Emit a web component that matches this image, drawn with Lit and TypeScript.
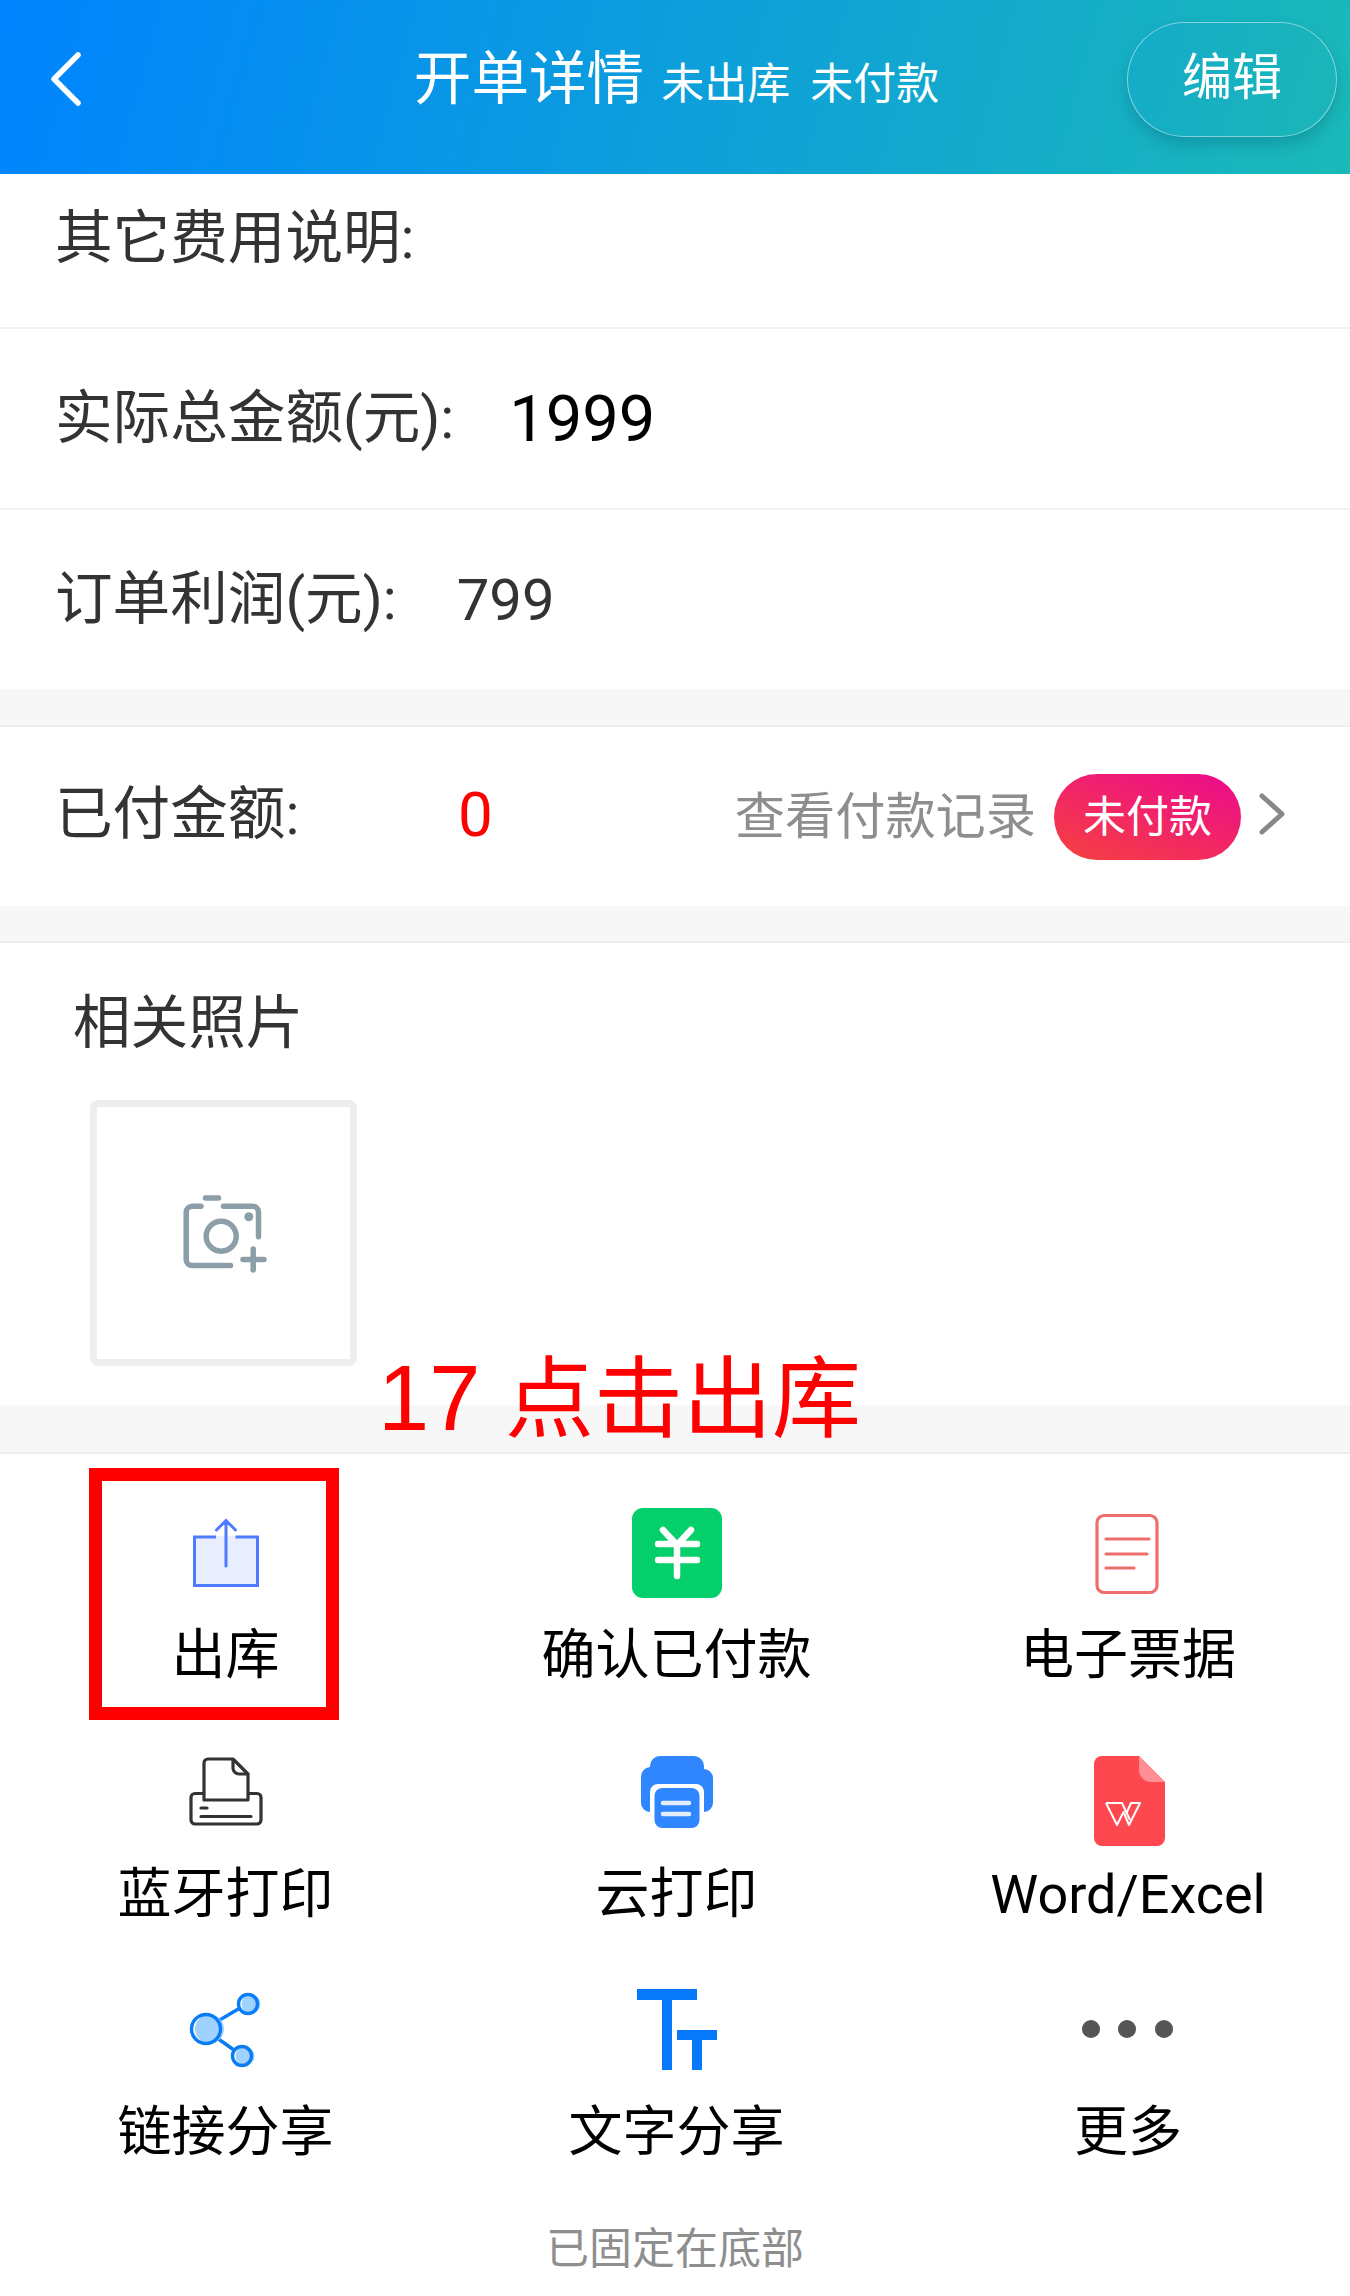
import { LitElement, html, css, svg } from "lit";
import { customElement } from "lit/decorators.js";

const icons: Record<string, unknown> = {
  out: svg`<path d="M13 28H79V79H13Z" fill="#e8eefd" stroke="none"/><path d="M36 29H14.5V77.5H77.5V29H55.5" fill="none" stroke="#4d7cfe" stroke-width="3"/><path d="M46 58V13M36.5 22L46 12.5L55.5 22" fill="none" stroke="#4d7cfe" stroke-width="3" stroke-linecap="round"/>`,
  pay: svg`<rect x="2" y="0" width="90" height="90" rx="11" fill="#04cf6b"/><path d="M33 22L47 37L61 22M28 36H67M28 52H67M47 36V68" fill="none" stroke="#fff" stroke-width="6.5" stroke-linecap="round" stroke-linejoin="round"/>`,
  doc: svg`<rect x="17" y="7.5" width="60" height="77" rx="7" fill="none" stroke="#ee6d6d" stroke-width="3.2"/><path d="M26 31H69M26 46H67M26 60H54" fill="none" stroke="#ee6d6d" stroke-width="3.2" stroke-linecap="round"/>`,
  bt: svg`<path d="M23 46.5H15a4 4 0 0 0-4 4V73a4 4 0 0 0 4 4H77a4 4 0 0 0 4-4V50.5a4 4 0 0 0-4-4H69" fill="none" stroke="#333" stroke-width="3.2"/><path d="M24 53V16a4 4 0 0 1 4-4H53L68 27V53Z" fill="none" stroke="#333" stroke-width="3.2" stroke-linejoin="round"/><path d="M53 12V21a6 6 0 0 0 6 6H68" fill="none" stroke="#333" stroke-width="3.2"/><path d="M21 61H27M21 69.5H71" fill="none" stroke="#333" stroke-width="3.2" stroke-linecap="round"/>`,
  cloud: svg`<path d="M20 20V19a10 10 0 0 1 10-10H64a10 10 0 0 1 10 10V22a9 9 0 0 1 9 9V56a9 9 0 0 1-9 9V45a8 8 0 0 0-8-8H28a8 8 0 0 0-8 8V65a9 9 0 0 1-9-9V31a10 10 0 0 1 9-11Z" fill="#2f86ff"/><rect x="24.5" y="41" width="45" height="40" rx="8" fill="#2f86ff"/><path d="M33 56H59M33 67H59" stroke="#e4eefc" stroke-width="4.5" stroke-linecap="round" fill="none"/>`,
  wps: svg`<path d="M14 17a8 8 0 0 1 8-8H59L85 35V91a8 8 0 0 1-8 8H22a8 8 0 0 1-8-8Z" fill="#fe4850"/><path d="M59 9L85 35H71a12 12 0 0 1-12-12Z" fill="#ff8f94"/><path d="M26 56H42L50 73M26 56L37 78L43.5 65L49 78L60 56H51L47 65" fill="none" stroke="#fff" stroke-width="2" stroke-linejoin="round"/>`,
  link: svg`<path d="M38 36L60 23M37 53L54 65" stroke="#0a7df5" stroke-width="3.4" fill="none"/><circle cx="29.5" cy="44" r="14.5" fill="#a0d2ff"/><circle cx="71" cy="19" r="9.5" fill="#a0d2ff"/><circle cx="65" cy="71" r="9.5" fill="#a0d2ff"/><g fill="none" stroke="#0a7df5" stroke-width="3.4"><circle cx="26" cy="44" r="14.5"/><circle cx="68" cy="19" r="9.5"/><circle cx="62" cy="71" r="9.5"/></g>`,
  text: svg`<path d="M7 4H67V15H42V85H32V15H7ZM47 45H87V55H72V85H62V55H47Z" fill="#0679fb"/>`,
  more: svg`<g fill="#555"><circle cx="11" cy="44" r="9"/><circle cx="47" cy="44" r="9"/><circle cx="84" cy="44" r="9"/></g>`,
};

const actions = [
  ["out", "出库"],
  ["pay", "确认已付款"],
  ["doc", "电子票据"],
  ["bt", "蓝牙打印"],
  ["cloud", "云打印"],
  ["wps", "Word/Excel"],
  ["link", "链接分享"],
  ["text", "文字分享"],
  ["more", "更多"],
];

@customElement("app-root")
export class AppRoot extends LitElement {
  static styles = css`
    :host {
      display: block;
      position: relative;
      width: 1350px;
      height: 2296px;
      overflow: hidden;
      background: #fff;
      font-family: Roboto, "Noto Sans CJK SC", sans-serif;
      color: #333;
    }
    .header {
      height: 174px;
      display: flex;
      align-items: center;
      justify-content: center;
      position: relative;
      color: #fff;
      background: linear-gradient(105deg, #0084ff 0%, #1ab9b8 100%);
    }
    .back {
      position: absolute;
      left: 48px;
      top: 52px;
    }
    .title {
      display: flex;
      align-items: baseline;
      gap: 20px;
      font-size: 43px;
      line-height: 60px;
      margin-top: -11px;
      margin-left: 3px;
    }
    .title b {
      font-weight: 400;
      font-size: 57.6px;
      margin-right: -3px;
    }
    .edit {
      position: absolute;
      left: 1127px;
      top: 22px;
      width: 210px;
      height: 115px;
      box-sizing: border-box;
      border-radius: 58px;
      border: 1.5px solid rgba(255, 255, 255, 0.45);
      background: linear-gradient(105deg, #14abc9, #1bb6b8);
      box-shadow: 0 8px 14px rgba(0, 80, 100, 0.25);
      display: flex;
      align-items: center;
      justify-content: center;
      font-size: 50px;
      line-height: 1;
      padding-bottom: 4px;
    }
    .row {
      display: flex;
      align-items: center;
      padding-left: 55px;
      font-size: 57.6px;
      line-height: 70px;
      height: 181px;
      box-sizing: border-box;
      border-bottom: 2px solid #f1f1f1;
    }
    .row.first {
      height: 155px;
      padding-bottom: 24px;
    }
    .row.last {
      border-bottom: 0;
      height: 179px;
    }
    .total {
      font-size: 65px;
      color: #000;
      margin-left: 55px;
    }
    .profit {
      font-size: 58px;
      margin-left: 60px;
    }
    .gap {
      background: #f7f7f7;
      border-bottom: 2px solid #eeeeee;
      height: 36px;
    }
    .gap.b {
      height: 35px;
    }
    .gap.c {
      height: 47px;
    }
    .pay {
      height: 179px;
      padding-right: 65px;
      border-bottom: 0;
    }
    .pay-label {
      width: 403px;
      margin-bottom: 4px;
    }
    .zero {
      color: #f00;
      font-size: 62px;
      margin-bottom: 4px;
    }
    .record {
      margin-left: auto;
      font-size: 50.2px;
      color: #8e8e8e;
      margin-right: 18px;
    }
    .pill {
      width: 187px;
      height: 86px;
      border-radius: 43px;
      color: #fff;
      font-size: 43px;
      display: flex;
      align-items: center;
      justify-content: center;
      background: linear-gradient(20deg, #f6413f 0%, #ec0a8e 100%);
      margin-right: 18px;
    }
    .chev {
      margin-bottom: 6px;
    }
    .photos {
      height: 462px;
      box-sizing: border-box;
      padding: 46px 0 0 73px;
      font-size: 57.6px;
      line-height: 70px;
    }
    .photo {
      margin: 41px 0 0 17px;
      width: 267px;
      height: 266px;
      box-sizing: border-box;
      border: 7px solid #eeeeee;
      border-radius: 8px;
      display: flex;
      align-items: center;
      justify-content: center;
    }
    .grid {
      display: grid;
      grid-template-columns: repeat(3, 450px);
      grid-auto-rows: 238.5px;
    }
    .cell {
      display: flex;
      flex-direction: column;
      align-items: center;
      padding-top: 54px;
      box-sizing: border-box;
      font-size: 54px;
      line-height: 72px;
      color: #000;
    }
    .cell svg {
      display: block;
      overflow: visible;
      margin-bottom: 22px;
    }
    .cell span {
      margin-left: 1px;
    }
    .cell:nth-child(3n + 2) span {
      margin-left: 3px;
    }
    .cell:nth-child(3n) span {
      margin-left: 6px;
    }
    .foot {
      text-align: center;
      font-size: 43px;
      line-height: 60px;
      color: #8e8e8e;
      margin-top: 49px;
    }
    .note {
      position: absolute;
      left: 378px;
      top: 1343px;
      font-size: 89px;
      line-height: 110px;
      color: #f00;
      white-space: nowrap;
      font-family: "Liberation Sans", "Noto Sans CJK SC", sans-serif;
    }
    .note span {
      font-size: 92px;
    }
    .mark {
      position: absolute;
      left: 89px;
      top: 1468px;
      width: 250px;
      height: 252px;
      box-sizing: border-box;
      border: 13px solid #f00;
    }
  `;

  render() {
    return html`
      <div class="header">
        <svg class="back" width="36" height="54" viewBox="0 0 36 54">
          <path d="M30 3L6 27L30 51" fill="none" stroke="#fff" stroke-width="5.5" stroke-linecap="round" stroke-linejoin="round" />
        </svg>
        <div class="title"><b>开单详情</b><span>未出库</span><span>未付款</span></div>
        <div class="edit">编辑</div>
      </div>
      <div class="row first">其它费用说明:</div>
      <div class="row">实际总金额(元):<span class="total">1999</span></div>
      <div class="row last">订单利润(元):<span class="profit">799</span></div>
      <div class="gap"></div>
      <div class="row pay">
        <span class="pay-label">已付金额:</span><span class="zero">0</span>
        <span class="record">查看付款记录</span>
        <span class="pill">未付款</span>
        <svg class="chev" width="26" height="46" viewBox="0 0 26 46">
          <path d="M3 5L23 23L3 41" fill="none" stroke="#888" stroke-width="5" stroke-linejoin="round" stroke-linecap="round" />
        </svg>
      </div>
      <div class="gap b"></div>
      <div class="photos">
        相关照片
        <div class="photo">
          <svg width="90" height="90" viewBox="0 0 90 90" fill="none" stroke="#8c9ea8" stroke-width="5.5" stroke-linecap="round">
            <path d="M22 18.2H13.2a6 6 0 0 0-6 6V71.5a6 6 0 0 0 6 6H51.5" />
            <path d="M26.5 10H39.5" />
            <path d="M44.5 18.2H73.5a6 6 0 0 1 6 6V48.8" />
            <circle cx="42.2" cy="48.2" r="15" />
            <circle cx="69.8" cy="28.8" r="4.5" fill="#8c9ea8" stroke="none" />
            <path d="M64 71.5H85M74.2 61V82" />
          </svg>
        </div>
      </div>
      <div class="gap c"></div>
      <div class="grid">
        ${actions.map(
          ([k, label]) => html`<div class="cell">
            <svg width="90" height="90" viewBox="0 0 90 90">${icons[k]}</svg>
            <span>${label}</span>
          </div>`
        )}
      </div>
      <div class="foot">已固定在底部</div>
      <div class="note"><span>17</span> 点击出库</div>
      <div class="mark"></div>
    `;
  }
}
